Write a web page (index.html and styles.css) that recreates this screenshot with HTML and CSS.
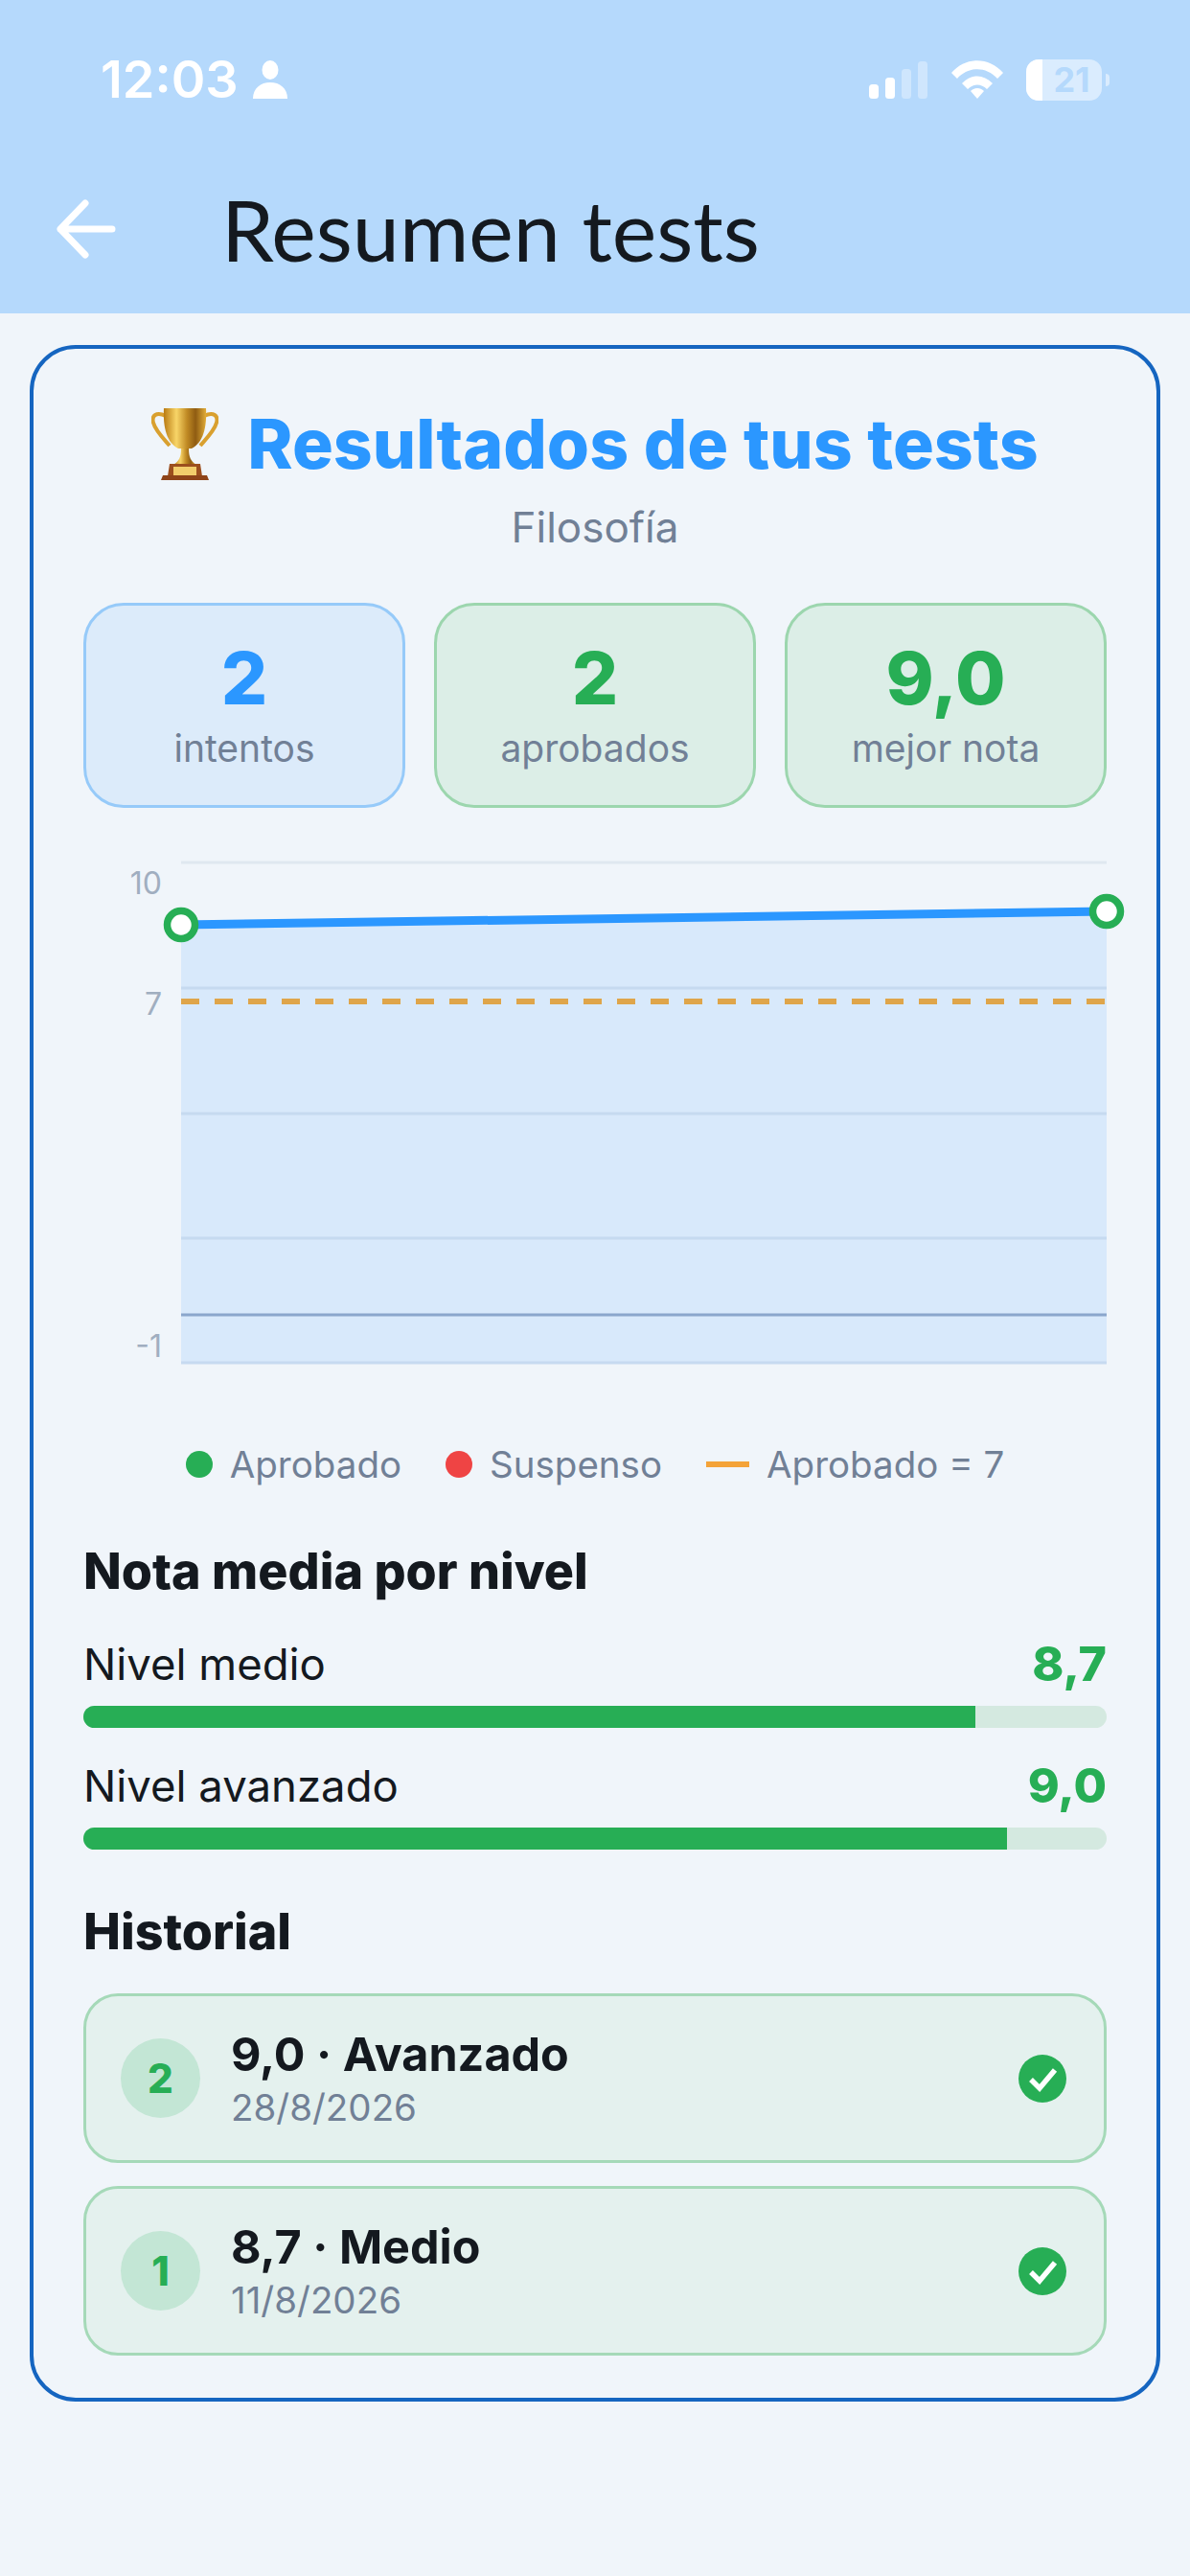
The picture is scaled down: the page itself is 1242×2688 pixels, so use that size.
FILE: index.html
```html
<!DOCTYPE html>
<html lang="es">
<head>
  <meta charset="UTF-8" />
  <meta name="viewport" content="width=device-width, initial-scale=1.0" />
  <title>Resumen tests</title>
  <link rel="stylesheet" href="styles.css">
</head>
<body>
  <header class="top">
    <div class="status">
      <div class="status-left">
        <span class="time">12:03</span>
        <svg class="person" width="36" height="40" viewBox="0 0 36 40"><ellipse cx="18" cy="10" rx="8.5" ry="10" fill="#fff"/><path d="M0 40c0-11 8-17 18-17s18 6 18 17z" fill="#fff"/></svg>
      </div>
      <div class="status-right">
        <svg width="62" height="39" viewBox="0 0 62 39">
          <rect x="0" y="24" width="10" height="15" rx="3.5" fill="#fff"/>
          <rect x="17" y="17" width="10" height="22" rx="3.5" fill="#fff"/>
          <rect x="34" y="8" width="10" height="31" rx="3.5" fill="#fff" opacity=".35"/>
          <rect x="51" y="0" width="10" height="39" rx="3.5" fill="#fff" opacity=".35"/>
        </svg>
        <svg width="54" height="40" viewBox="0 0 54 40">
          <path d="M0 13C15-4 39-4 54 13l-6 6C36 6 18 6 6 19z" fill="#fff"/>
          <path d="M11 24c10-10 22-10 32 0l-6 6c-6-6-14-6-20 0z" fill="#fff"/>
          <path d="M20 32c4-4 10-4 14 0l-7 8z" fill="#fff"/>
        </svg>
        <div class="battery">
          <div class="battery-body"><span class="battery-level"></span><span class="battery-num">21</span></div>
          <span class="battery-nub"></span>
        </div>
      </div>
    </div>
    <div class="appbar">
      <svg class="back" width="62" height="62" viewBox="0 0 62 62" fill="none" stroke="#fff" stroke-width="7" stroke-linecap="round" stroke-linejoin="round"><path d="M58 31H4M30 4 4 31l26 27"/></svg>
      <h1>Resumen tests</h1>
    </div>
  </header>

  <main class="card">
    <div class="title-row">
      <svg class="trophy" width="70" height="78" viewBox="0 0 70 78">
        <defs>
          <linearGradient id="gold" x1="0" x2="1" y1="0" y2="0">
            <stop offset="0" stop-color="#b97a12"/>
            <stop offset=".3" stop-color="#f8d568"/>
            <stop offset=".55" stop-color="#c08a24"/>
            <stop offset=".75" stop-color="#8f5c12"/>
            <stop offset="1" stop-color="#e2ad38"/>
          </linearGradient>
        </defs>
        <path d="M15 10C5 5 0 10 2 17c2 8 10 16 17 24M55 10c10-5 15 0 13 7-2 8-10 16-17 24" fill="none" stroke="#d9a02f" stroke-width="4"/>
        <path d="M13 2h44c1 20-3 36-15 42H28C16 38 12 22 13 2z" fill="url(#gold)"/>
        <path d="M31 44h8c0 9 2 13 8 17H23c6-4 8-8 8-17z" fill="url(#gold)"/>
        <path d="M19 60h32l2 13H17z" fill="#9c4f1e"/>
        <path d="M12 72h46l2 5H10z" fill="#8e4419"/>
        <rect x="23" y="63" width="24" height="9" fill="#f2cd6b"/>
      </svg>
      <h2>Resultados de tus tests</h2>
    </div>
    <p class="subject">Filosofía</p>

    <div class="stats">
      <div class="stat stat-blue"><strong>2</strong><span>intentos</span></div>
      <div class="stat stat-green"><strong>2</strong><span>aprobados</span></div>
      <div class="stat stat-green"><strong>9,0</strong><span>mejor nota</span></div>
    </div>

    <svg class="chart" width="1068" height="540" viewBox="0 0 1068 540">
      <path d="M102 65 1068 51V522H102z" fill="#d8e9fb"/>
      <g stroke-width="3">
        <path d="M102 0H1068" stroke="#dfe8f0"/>
        <path d="M102 131H1068M102 262H1068M102 392H1068M102 522H1068" stroke="#c6daf0"/>
      </g>
      <path d="M102 472H1068" stroke="#8aa6cc" stroke-width="3"/>
      <path d="M102 145H1068" stroke="#dfa54a" stroke-width="6" stroke-dasharray="19 16"/>
      <path d="M102 65 1068 51" stroke="#2b97ff" stroke-width="9"/>
      <circle cx="102" cy="65" r="14.5" fill="#fff" stroke="#27ae55" stroke-width="7.5"/>
      <circle cx="1068" cy="51" r="14.5" fill="#fff" stroke="#27ae55" stroke-width="7.5"/>
      <text class="axis" x="82" y="33" text-anchor="end">10</text>
      <text class="axis" x="82" y="159" text-anchor="end">7</text>
      <text class="axis" x="82" y="516" text-anchor="end">-1</text>
    </svg>

    <div class="legend">
      <span class="legend-item"><i class="dot dot-green"></i>Aprobado</span>
      <span class="legend-item"><i class="dot dot-red"></i>Suspenso</span>
      <span class="legend-item"><i class="dash"></i>Aprobado = 7</span>
    </div>

    <h3 class="section-title">Nota media por nivel</h3>
    <div class="level">
      <div class="level-row"><span>Nivel medio</span><b>8,7</b></div>
      <div class="bar"><div class="bar-fill" style="width: 87.2%"></div></div>
    </div>
    <div class="level">
      <div class="level-row"><span>Nivel avanzado</span><b>9,0</b></div>
      <div class="bar"><div class="bar-fill" style="width: 90.3%"></div></div>
    </div>

    <h3 class="section-title history-title">Historial</h3>
    <div class="history">
      <div class="attempt">
        <span class="badge">2</span>
        <div class="attempt-text"><b>9,0 · Avanzado</b><span>28/8/2026</span></div>
        <svg width="50" height="50" viewBox="0 0 50 50"><circle cx="25" cy="25" r="25" fill="#27ae55"/><path d="M13 26l9 9 16-19" fill="none" stroke="#fff" stroke-width="5.5"/></svg>
      </div>
      <div class="attempt">
        <span class="badge">1</span>
        <div class="attempt-text"><b>8,7 · Medio</b><span>11/8/2026</span></div>
        <svg width="50" height="50" viewBox="0 0 50 50"><circle cx="25" cy="25" r="25" fill="#27ae55"/><path d="M13 26l9 9 16-19" fill="none" stroke="#fff" stroke-width="5.5"/></svg>
      </div>
    </div>
  </main>
</body>
</html>
```

FILE: styles.css
```css
* {
  margin: 0;
  padding: 0;
  box-sizing: border-box;
}

body {
  width: 1242px;
  min-height: 2688px;
  background: #f0f5fa;
  font-family: Inter, "Liberation Sans", sans-serif;
  color: #14191f;
}

.top {
  height: 327px;
  background: #b5d9fc;
  padding-top: 61px;
}

.status {
  display: flex;
  justify-content: space-between;
  align-items: center;
  height: 44px;
  padding: 0 84px 0 105px;
}

.status-left,
.status-right {
  display: flex;
  align-items: center;
}

.status-left {
  gap: 15px;
}

.status-right {
  gap: 24px;
}

.time {
  color: #fff;
  font-size: 54px;
  font-weight: 600;
  line-height: 44px;
}

.battery {
  display: flex;
  align-items: center;
  gap: 4px;
}

.battery-body {
  position: relative;
  display: flex;
  justify-content: center;
  align-items: center;
  width: 79px;
  height: 43px;
  border-radius: 13px;
  background: rgba(255, 255, 255, 0.5);
  overflow: hidden;
}

.battery-level {
  position: absolute;
  left: 0;
  top: 0;
  bottom: 0;
  width: 17px;
  background: #fff;
}

.battery-num {
  margin-left: 16px;
  color: #b5d9fc;
  font-size: 36px;
  font-weight: 700;
  line-height: 1;
}

.battery-nub {
  width: 4px;
  height: 13px;
  border-radius: 0 4px 4px 0;
  background: rgba(255, 255, 255, 0.5);
}

.appbar {
  display: flex;
  align-items: center;
  gap: 110px;
  margin-top: 88px;
  padding-left: 59px;
}

.appbar h1 {
  font-family: Lato, sans-serif;
  font-size: 88px;
  font-weight: 400;
  line-height: 92px;
}

.card {
  margin: 33px 31px 0;
  height: 2146px;
  padding: 52px;
  border: 4px solid #1565c0;
  border-radius: 48px;
}

.title-row {
  display: flex;
  justify-content: center;
  align-items: center;
  gap: 30px;
  height: 80px;
  margin-top: 7px;
}

.title-row h2 {
  color: #2b97ff;
  font-size: 71.5px;
  font-weight: 800;
  white-space: nowrap;
}

.subject {
  margin-top: 19px;
  color: #718096;
  font-size: 44px;
  line-height: 56px;
  text-align: center;
}

.stats {
  display: grid;
  grid-template-columns: repeat(3, 1fr);
  gap: 30px;
  margin-top: 51px;
}

.stat {
  display: flex;
  flex-direction: column;
  align-items: center;
  height: 214px;
  padding-top: 30px;
  border: 3px solid;
  border-radius: 42px;
}

.stat strong {
  font-size: 76px;
  font-weight: 800;
  line-height: 90px;
}

.stat span {
  margin-top: 5px;
  color: #718096;
  font-size: 39px;
  line-height: 48px;
}

.stat-blue {
  background: #dcebfa;
  border-color: #96caf9;
}

.stat-blue strong {
  color: #2b97ff;
}

.stat-green {
  background: #dceee7;
  border-color: #9cd6ae;
}

.stat-green strong {
  color: #27ae55;
}

.chart {
  display: block;
  margin-top: 57px;
  overflow: visible;
}

.axis {
  fill: #a0aec0;
  font-size: 32px;
}

.legend {
  display: flex;
  justify-content: center;
  align-items: center;
  gap: 46px;
  margin-top: 65px;
  color: #718096;
  font-size: 38.5px;
  line-height: 46px;
}

.legend-item {
  display: flex;
  align-items: center;
  gap: 18px;
}

.dot {
  width: 28px;
  height: 28px;
  border-radius: 50%;
}

.dot-green {
  background: #27ae55;
}

.dot-red {
  background: #ef4444;
}

.dash {
  width: 45px;
  height: 6px;
  background: #f4a338;
}

.section-title {
  margin-top: 59px;
  font-size: 52px;
  font-weight: 800;
  line-height: 60px;
}

.level {
  margin-top: 30px;
}

.section-title + .level {
  margin-top: 36px;
}

.level-row {
  display: flex;
  justify-content: space-between;
  align-items: center;
  height: 60px;
  font-size: 45.5px;
}

.level-row b {
  color: #27ae55;
  font-size: 50px;
  font-weight: 800;
}

.bar {
  height: 23px;
  margin-top: 14px;
  border-radius: 12px;
  background: #d4e9e0;
  overflow: hidden;
}

.bar-fill {
  height: 100%;
  background: #27ae55;
}

.history-title {
  margin-top: 56px;
}

.history {
  display: flex;
  flex-direction: column;
  gap: 24px;
  margin-top: 34px;
}

.attempt {
  display: flex;
  align-items: center;
  height: 177px;
  padding: 0 39px 0 36px;
  border: 3px solid #a5d9b8;
  border-radius: 36px;
  background: #e4f1ee;
}

.badge {
  display: flex;
  justify-content: center;
  align-items: center;
  width: 83px;
  height: 83px;
  border-radius: 50%;
  background: #c3e6d5;
  color: #27ae55;
  font-size: 42px;
  font-weight: 800;
}

.attempt-text {
  display: flex;
  flex-direction: column;
  flex: 1;
  margin-left: 32px;
}

.attempt-text b {
  font-size: 48.5px;
  font-weight: 700;
  line-height: 60px;
}

.attempt-text span {
  color: #718096;
  font-size: 38.5px;
  line-height: 50px;
}
```
